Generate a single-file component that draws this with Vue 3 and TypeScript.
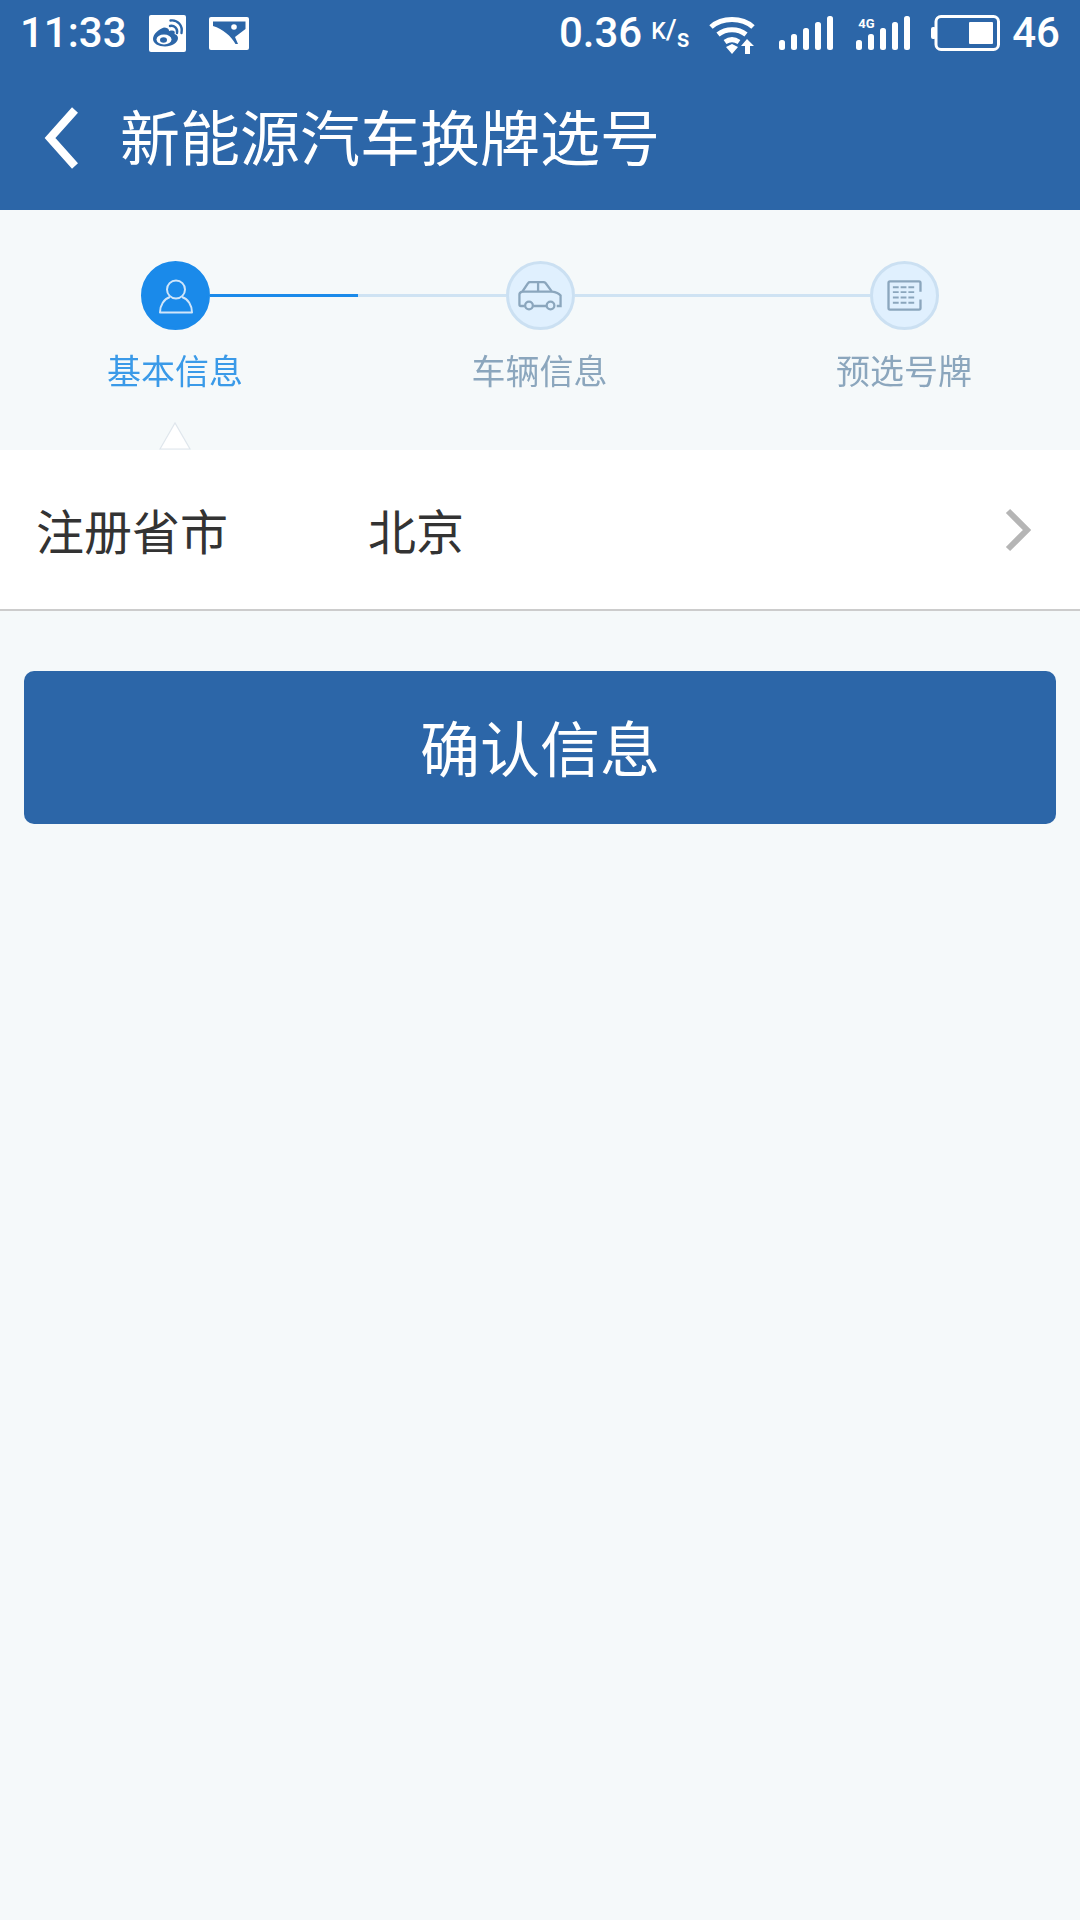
<template>
  <div class="page">
    <header class="top">
      <!-- 状态栏 -->
      <div class="status-bar">
        <span class="clock">11:33</span>
        <svg class="ic-weibo" width="37" height="37" viewBox="0 0 37 37">
          <rect width="37" height="37" rx="2" fill="#fff" />
          <path d="M15 12.500c-5 1.500-11 6.500-11 11.500 0 4.500 5.500 7.500 12 7.500 7 0 13-4 13-8.500 0-2.500-2-3.500-3.500-4 .8-2 .2-3.500-2.500-3.500-1.500 0-3 .7-3 .7s.8-3.500-5-3.700z" fill="#2c66a8" />
          <ellipse cx="15" cy="24.500" rx="7.500" ry="5" fill="#fff" />
          <ellipse cx="14.500" cy="25" rx="3.500" ry="2.800" fill="#2c66a8" />
          <path d="M21 11c4-1 8 2.500 7 7M21.500 5.500c7-1 12.500 5 11 12.500" fill="none" stroke="#2c66a8" stroke-width="2.400" stroke-linecap="round" />
        </svg>
        <svg class="ic-photo" width="40" height="33" viewBox="0 0 40 33">
          <rect width="40" height="33" rx="2" fill="#fff" />
          <path d="M4 4.500h32.500V12L26 20l3 7h-2.500C22 19 14 12 4 9z" fill="#2c66a8" />
          <circle cx="25" cy="10" r="2.800" fill="#fff" />
        </svg>
        <span class="speed">0.36</span>
        <span class="speed-unit">K<i>/</i><em>s</em></span>
        <svg class="ic-wifi" width="48" height="40" viewBox="0 0 48 40">
          <path d="M2 12C13 2 33 2 44 12M9 19.500c8-6.500 20-6.500 28 0M16 27c4.500-3 9.500-3 14 0" fill="none" stroke="#fff" stroke-width="5" />
          <path d="M17 32l6-3 6 3-6 7zM38 24l7 7h-4v8h-5v-8h-4z" fill="#fff" />
        </svg>
        <svg class="ic-signal" width="54" height="34" viewBox="0 0 54 34">
          <rect v-for="bar in signalBars" :key="bar.x" :x="bar.x" :y="bar.y" width="6" :height="34 - bar.y" rx="2.500" fill="#fff" />
        </svg>
        <div class="signal-4g">
          <span>4G</span>
          <svg width="54" height="34" viewBox="0 0 54 34">
            <rect v-for="bar in signalBars" :key="bar.x" :x="bar.x" :y="bar.y" width="6" :height="34 - bar.y" rx="2.500" fill="#fff" />
          </svg>
        </div>
        <svg class="ic-battery" width="69" height="36" viewBox="0 0 69 36">
          <rect x="0" y="12" width="5" height="12" rx="2" fill="#fff" />
          <rect x="5" y="1.500" width="62.500" height="33" rx="5" fill="none" stroke="#fff" stroke-width="3" />
          <rect x="38" y="7" width="24" height="22" rx="1" fill="#fff" />
        </svg>
        <span class="level">46</span>
      </div>

      <nav class="nav">
        <svg class="back" width="36" height="62" viewBox="0 0 36 62">
          <path d="M32 3L7 31l25 28" fill="none" stroke="#fff" stroke-width="8" />
        </svg>
        <h1>新能源汽车换牌选号</h1>
      </nav>
    </header>

    <!-- 步骤条 -->
    <section class="steps">
      <div class="track">
        <template v-for="(step, i) in steps" :key="step.label">
          <div class="dot" :class="{ active: step.active }">
            <svg v-if="step.icon === 'user'" width="36" height="36" viewBox="0 0 36 36" fill="none" stroke="#cfe5fa" stroke-width="2">
              <circle cx="18" cy="11.500" r="9" />
              <path d="M12 19C6 21 2 27 2 34.500h32C34 27 30 21 24 19" stroke-linejoin="round" />
            </svg>
            <svg v-else-if="step.icon === 'car'" width="44" height="31" viewBox="0 0 46 32" fill="none" stroke="#8ba6bd" stroke-width="2.400">
              <path d="M7 27H3c-1 0-1.500-.7-1.500-1.500V15c0-1.500 1-2.500 3-3l6-9c.5-.8 1-1 2-1h14c1 0 1.700.3 2.300 1l6.700 9c4 .5 7 1.500 9 4v11h-4" />
              <path d="M16 27h14M5 12h30M21 2v10" />
              <circle cx="11.500" cy="26.500" r="4" />
              <circle cx="34" cy="26.500" r="4" />
            </svg>
            <svg v-else width="35" height="31" viewBox="0 0 36 32" fill="none" stroke="#8ba6bd">
              <path d="M34.500 12V3c0-1-.5-1.500-1.500-1.500H3C2 1.500 1.500 2 1.500 3v26c0 1 .5 1.500 1.500 1.500h30c1 0 1.500-.5 1.500-1.500v-9" stroke-width="2.400" />
              <path d="M6 7.500h6M14 7.500h6M22 7.500h6M6 12.500h6M14 12.500h6M22 12.500h6M6 18h6M14 18h6M22 18h6M6 23.500h6M14 23.500h6M22 23.500h6" stroke-width="2" />
            </svg>
          </div>
          <div v-if="i < steps.length - 1" class="line">
            <div class="line-fill" :style="{ width: step.progress + '%' }"></div>
          </div>
        </template>
      </div>
      <div class="labels">
        <div v-for="step in steps" :key="step.label" class="label" :class="{ active: step.active }">
          {{ step.label }}
          <svg v-if="step.active" class="notch" width="34" height="30" viewBox="0 0 34 30">
            <path d="M2 29L17 3l15 26z" fill="#fff" stroke="#dfe6ec" stroke-width="1.200" />
          </svg>
        </div>
      </div>
    </section>

    <!-- 注册省市 -->
    <div class="row">
      <span class="row-name">注册省市</span>
      <span class="row-value">北京</span>
      <svg class="chevron" width="26" height="44" viewBox="0 0 26 44">
        <path d="M3 3l19 19L3 41" fill="none" stroke="#b5b5b5" stroke-width="6" />
      </svg>
    </div>

    <button class="confirm" type="button">确认信息</button>
  </div>
</template>

<script setup lang="ts">
interface Step {
  label: string
  icon: 'user' | 'car' | 'plate'
  active: boolean
  progress: number
}

const steps: Step[] = [
  { label: '基本信息', icon: 'user', active: true, progress: 50 },
  { label: '车辆信息', icon: 'car', active: false, progress: 0 },
  { label: '预选号牌', icon: 'plate', active: false, progress: 0 },
]

const signalBars = [
  { x: 0, y: 24 },
  { x: 12, y: 18 },
  { x: 24, y: 12 },
  { x: 36, y: 6 },
  { x: 48, y: 0 },
]
</script>

<style>
body {
  background: #f5f9fa;
}
</style>

<style scoped>
.page {
  min-height: 1920px;
  background: #f5f9fa;
  font-family: 'Noto Sans CJK SC', 'Noto Sans', sans-serif;
  color: #333;
}

.top {
  height: 210px;
  background: #2c66a8;
  color: #fff;
}

.status-bar {
  height: 70px;
  box-sizing: border-box;
  display: flex;
  align-items: center;
  padding: 0 20px 4px 20px;
  font-family: Roboto, sans-serif;
  font-size: 42px;
  font-weight: 500;
}

.clock {
  width: 106px;
  margin-right: 23px;
  line-height: 1;
}

.ic-weibo {
  margin-right: 23px;
}

.speed {
  margin-left: auto;
  line-height: 1;
}

.speed-unit {
  position: relative;
  top: -3px;
  width: 38px;
  margin-left: 9px;
  font-size: 23px;
  line-height: 1;
  white-space: nowrap;
}

.speed-unit i {
  font-style: normal;
  font-size: 28px;
}

.speed-unit em {
  position: relative;
  top: 8px;
  font-style: normal;
  font-size: 25px;
}

.ic-wifi {
  margin: 4px 0 0 20px;
}

.ic-signal {
  margin-left: 22px;
}

.signal-4g {
  position: relative;
  display: flex;
  margin-left: 23px;
}

.signal-4g span {
  position: absolute;
  top: 1px;
  left: 2px;
  font-size: 13px;
  font-weight: 700;
  line-height: 1;
}

.ic-battery {
  margin-left: 21px;
}

.level {
  margin-left: 12px;
  line-height: 1;
}

.nav {
  height: 140px;
  display: flex;
  align-items: center;
  padding: 0 0 10px 43px;
  box-sizing: border-box;
}

.back {
  margin: 6px 41px 0 0;
}

.nav h1 {
  margin: 0;
  font-size: 60px;
  font-weight: 400;
  line-height: 1;
  white-space: nowrap;
}

.steps {
  height: 240px;
  padding-top: 51px;
  box-sizing: border-box;
  filter: blur(0.7px);
}

.track {
  display: flex;
  align-items: center;
  padding: 0 141px 0 141px;
}

.dot {
  flex: none;
  width: 69px;
  height: 69px;
  box-sizing: border-box;
  border: 3px solid #cbe0f2;
  border-radius: 50%;
  background: #e0f0fe;
  display: flex;
  align-items: center;
  justify-content: center;
}

.dot.active {
  border-color: #1a8aea;
  background: #1a8aea;
}

.line {
  flex: 1;
  height: 3px;
  margin-top: -1px;
  background: #cfe3f3;
}

.line-fill {
  height: 100%;
  background: #1a8aea;
}

.labels {
  display: flex;
  justify-content: space-between;
  padding: 0 106px 0 105px;
  margin-top: 20px;
}

.label {
  position: relative;
  width: 140px;
  font-size: 34px;
  line-height: 40px;
  text-align: center;
  white-space: nowrap;
  color: #8ba6bd;
}

.label.active {
  color: #3a9ae8;
}

.notch {
  position: absolute;
  top: 70px;
  left: 53px;
}

.row {
  height: 161px;
  box-sizing: border-box;
  display: flex;
  align-items: center;
  padding: 0 49px 2px 36px;
  background: #fff;
  border-bottom: 2px solid #ccc;
  font-size: 48px;
}

.row-name {
  width: 332px;
}

.row-value {
  flex: 1;
}

.chevron {
  margin-top: 2px;
}

.confirm {
  display: block;
  width: 1032px;
  height: 153px;
  margin: 60px 24px 0;
  padding: 0 0 4px;
  border: none;
  border-radius: 10px;
  background: #2c66a8;
  color: #fff;
  font-family: inherit;
  font-size: 60px;
}
</style>
